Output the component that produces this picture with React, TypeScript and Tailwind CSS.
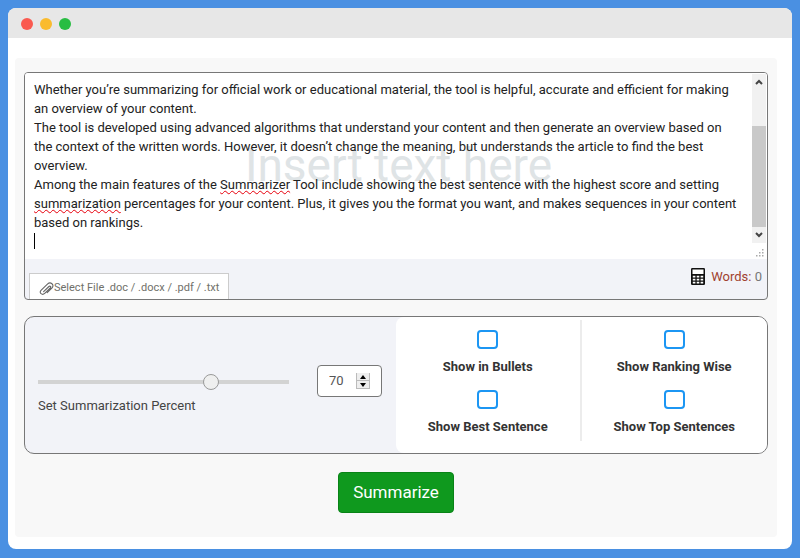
import React, { useState } from 'react';

const PARAGRAPHS = [
  'Whether you’re summarizing for official work or educational material, the tool is helpful, accurate and efficient for making an overview of your content.',
  'The tool is developed using advanced algorithms that understand your content and then generate an overview based on the context of the written words. However, it doesn’t change the meaning, but understands the article to find the best overview.',
  'Among the main features of the Summarizer Tool include showing the best sentence with the highest score and setting summarization percentages for your content. Plus, it gives you the format you want, and makes sequences in your content based on rankings.',
  '',
];

const OPTIONS = [
  ['Show in Bullets', 'Show Best Sentence'],
  ['Show Ranking Wise', 'Show Top Sentences'],
];

const CalculatorIcon = () => (
  <svg viewBox="0 0 14 17" className="h-[17px] w-[14px] shrink-0" aria-hidden="true">
    <rect width="14" height="17" rx="1.2" fill="#111" />
    <path
      fill="#fff"
      d="M1.500 1.500h11v4.500h-11zM1.800 7.700h2.600v1.800H1.800zM5.700 7.700h2.600v1.800H5.700zM9.600 7.700h2.600v1.800H9.600zM1.800 10.700h2.600v1.800H1.800zM5.700 10.700h2.600v1.800H5.700zM9.600 10.700h2.600v1.800H9.600zM1.800 13.700h2.600v1.800H1.800zM5.700 13.700h2.600v1.800H5.700zM9.600 13.700h2.600v1.800H9.600z"
    />
  </svg>
);

const ClipIcon = () => (
  <svg viewBox="0 0 15 14" className="h-[14px] w-[15px] shrink-0" fill="none" stroke="#666" strokeWidth="1.1" strokeLinecap="round" aria-hidden="true">
    <path d="M4.600 9.600 9.900 4.500c1.200-1.100 2.600.300 1.400 1.500l-5.600 5.400C3.300 13.700-.4 10.900 2 8.300l6.700-6.400c2.800-2.600 7.100.900 4.400 3.900L8.200 10.700" />
  </svg>
);

const SpellingLayer: React.FC<{ text: string }> = ({ text }) => (
  <div aria-hidden="true" className="pointer-events-none absolute inset-0 whitespace-pre-wrap pt-[7px] pr-3 pl-[9px] text-transparent">
    {text.split(/(Summarizer|summarization)/g).map((part, index) =>
      index % 2 === 1 ? (
        <span key={index} className="underline decoration-red-600 decoration-wavy decoration-1 underline-offset-1">{part}</span>
      ) : (
        part
      )
    )}
    <span className="inline-block h-4 w-px bg-black align-text-bottom" />
  </div>
);

const Editor = () => {
  const [text, setText] = useState(PARAGRAPHS.join('\n'));

  return (
    <section className="overflow-hidden rounded border border-[#777] bg-[#f2f3f8]">
      <div className="flex h-[186px] bg-white">
        <div className="relative flex-1 text-[13px] leading-[19px]">
          <div aria-hidden="true" className="absolute inset-x-0 top-[68px] pl-5 text-center text-[46px] leading-[48px] text-[#dfe4e6]">
            Insert text here
          </div>
          <SpellingLayer text={text} />
          <textarea
            aria-label="Text to summarize"
            spellCheck={false}
            value={text}
            onChange={(e) => setText(e.target.value)}
            className="relative block h-full w-full resize-none overflow-hidden bg-transparent pt-[7px] pr-3 pl-[9px] text-[#222] outline-none"
          />
        </div>
        <div className="flex w-[15px] flex-col">
          <div className="mt-px flex h-[169px] w-[14px] flex-col bg-[#f1f1f1]">
            <button type="button" aria-label="Scroll up" className="flex h-4 items-center justify-center">
              <svg viewBox="0 0 8 6" className="h-[6px] w-2" fill="none" stroke="#444" strokeWidth="2"><path d="M1 5l3-3 3 3" /></svg>
            </button>
            <div className="mt-9 flex-1 bg-[#c9c9c9]" />
            <button type="button" aria-label="Scroll down" className="flex h-4 items-center justify-center">
              <svg viewBox="0 0 8 6" className="h-[6px] w-2" fill="none" stroke="#444" strokeWidth="2"><path d="M1 1l3 3 3-3" /></svg>
            </button>
          </div>
          <svg viewBox="0 0 8 8" className="mt-[6px] ml-1 h-2 w-2" fill="#aaa" aria-hidden="true">
            <path d="M6 0h1.500v1.500H6zM3 3h1.500v1.500H3zM6 3h1.500v1.500H6zM0 6h1.500v1.500H0zM3 6h1.500v1.500H3zM6 6h1.500v1.500H6z" />
          </svg>
        </div>
      </div>
      <div className="flex h-10 items-end justify-between pr-[5px] pl-1">
        <label className="flex h-[26px] cursor-pointer items-center border border-b-0 border-[#ccc] bg-white px-[9px] pt-1 text-[11px] text-[#70706a]">
          <ClipIcon />
          Select File .doc / .docx / .pdf / .txt
          <input type="file" accept=".doc,.docx,.pdf,.txt" className="sr-only" />
        </label>
        <div className="flex items-center gap-[6px] self-start pt-2 text-[13px] leading-[19px] text-[#a0412f]">
          <CalculatorIcon />
          <span>Words: <span className="text-[#777]">0</span></span>
        </div>
      </div>
    </section>
  );
};

const Settings = () => {
  const [percent, setPercent] = useState(70);

  return (
    <section className="mt-4 grid grid-cols-2 overflow-hidden rounded-[10px] border border-[#777] bg-[#f2f3f8]">
      <div className="flex items-start pt-12 pr-[14px] pl-[13px]">
        <div className="flex flex-1 flex-col pt-[9px]">
          <input
            id="percent"
            type="range"
            value={percent}
            onChange={(e) => setPercent(Number(e.target.value))}
            className="h-4 w-full appearance-none bg-transparent [&::-webkit-slider-runnable-track]:h-1 [&::-webkit-slider-runnable-track]:bg-[#d3d3d3] [&::-webkit-slider-thumb]:-mt-[6px] [&::-webkit-slider-thumb]:h-4 [&::-webkit-slider-thumb]:w-4 [&::-webkit-slider-thumb]:appearance-none [&::-webkit-slider-thumb]:rounded-full [&::-webkit-slider-thumb]:border [&::-webkit-slider-thumb]:border-[#999] [&::-webkit-slider-thumb]:bg-[#efefef]"
          />
          <label htmlFor="percent" className="mt-[6px] text-[13px] leading-[19px] text-[#444]">Set Summarization Percent</label>
        </div>
        <div className="ml-7 flex h-8 w-[65px] items-center rounded border border-[#777] bg-white pr-[11px] pl-[11px]">
          <input
            type="number"
            aria-label="Summarization percent"
            value={percent}
            onChange={(e) => setPercent(Number(e.target.value))}
            className="min-w-0 flex-1 appearance-none bg-transparent text-[13px] text-[#555] outline-none [-moz-appearance:textfield] [&::-webkit-inner-spin-button]:appearance-none"
          />
          <div className="flex h-4 w-[14px] flex-col gap-px bg-[#bbb]">
            <button type="button" aria-label="Increase" onClick={() => setPercent(percent + 1)} className="flex flex-1 items-center justify-center border-x border-[#bbb] bg-[#eee]">
              <svg viewBox="0 0 6 4" className="h-1 w-[6px]"><path d="M0 4l3-4 3 4z" /></svg>
            </button>
            <button type="button" aria-label="Decrease" onClick={() => setPercent(percent - 1)} className="flex flex-1 items-center justify-center border border-t-0 border-[#bbb] bg-[#eee]">
              <svg viewBox="0 0 6 4" className="h-1 w-[6px]"><path d="M0 0l3 4 3-4z" /></svg>
            </button>
          </div>
        </div>
      </div>
      <div className="grid grid-cols-2 rounded-lg bg-white pt-[3px] pb-3">
        {OPTIONS.map((column, index) => (
          <div key={index} className={`flex h-[121px] flex-col gap-[14px] pt-[10px] ${index === 0 ? 'border-r-2 border-[#ececec]' : ''}`}>
            {column.map((name) => (
              <label key={name} className="flex flex-col items-center gap-[9px] text-[13px] leading-[18px] font-bold text-[#333]">
                <input type="checkbox" className="h-[19px] w-[21px] appearance-none rounded border-2 border-[#1c96f3] bg-white checked:bg-[#1c96f3]" />
                {name}
              </label>
            ))}
          </div>
        ))}
      </div>
    </section>
  );
};

export default function App() {
  return (
    <div className="flex min-h-screen flex-col bg-[#4a90e2] px-2 pt-2 pb-[9px] font-[Roboto,sans-serif]">
      <div className="flex flex-1 flex-col overflow-hidden rounded-lg bg-white">
        <header className="flex h-[30px] items-center gap-[7px] bg-[#e7e7e7] pt-px pl-[13px]">
          <span className="h-3 w-3 rounded-full bg-[#fa5a50]" />
          <span className="h-3 w-3 rounded-full bg-[#fabb2e]" />
          <span className="h-3 w-3 rounded-full bg-[#28bd42]" />
        </header>
        <main className="mt-5 mr-[15px] mb-3 ml-[7px] flex-1 rounded bg-[#f8f8f8] px-[9px] pt-[14px] pb-6">
          <Editor />
          <Settings />
          <div className="mt-[18px] flex justify-center">
            <button type="button" className="h-[41px] rounded border border-[#098317] bg-[#0f991e] px-[14px] text-[17px] text-white">Summarize</button>
          </div>
        </main>
      </div>
    </div>
  );
}
